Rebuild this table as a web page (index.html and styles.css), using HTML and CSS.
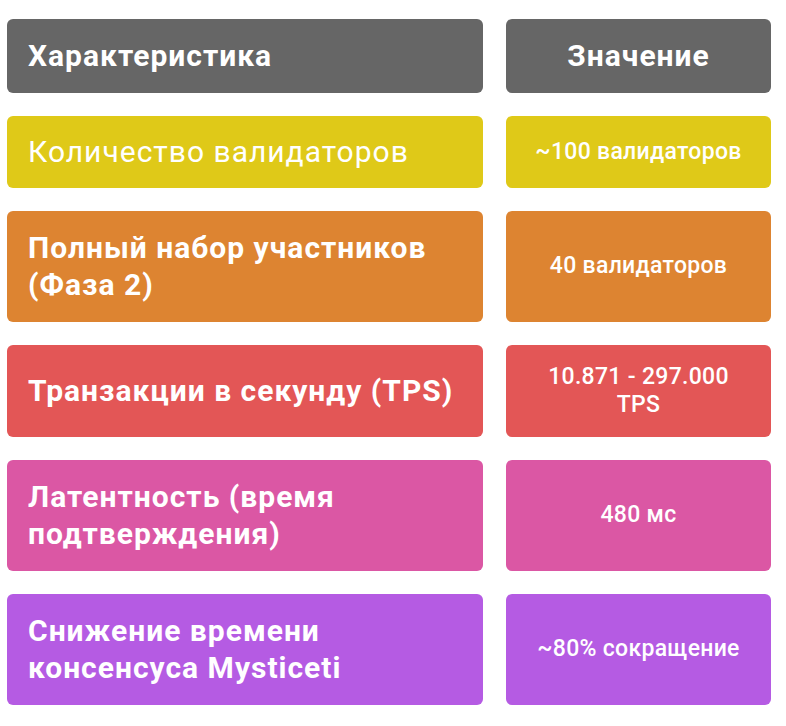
FILE: index.html
```html
<!DOCTYPE html>
<html lang="ru">
<head>
<meta charset="utf-8">
<title>Характеристики</title>
<link rel="stylesheet" href="styles.css">
</head>
<body>
<div class="table">
  <div class="cell key head">Характеристика</div>
  <div class="cell val head">Значение</div>

  <div class="cell key yellow light">Количество валидаторов</div>
  <div class="cell val yellow">~100 валидаторов</div>

  <div class="cell key orange">Полный набор участников (Фаза 2)</div>
  <div class="cell val orange">40 валидаторов</div>

  <div class="cell key red">Транзакции в секунду (TPS)</div>
  <div class="cell val red">10.871 - 297.000<br>TPS</div>

  <div class="cell key pink">Латентность (время подтверждения)</div>
  <div class="cell val pink">480 мс</div>

  <div class="cell key purple">Снижение времени консенсуса Mysticeti</div>
  <div class="cell val purple">~80% сокращение</div>
</div>
</body>
</html>
```

FILE: styles.css
```css
html, body {
  margin: 0;
  padding: 0;
  background: #ffffff;
}

body {
  font-family: Roboto, "Liberation Sans", Arial, sans-serif;
  color: #ffffff;
}

.table {
  display: grid;
  grid-template-columns: 476px 265px;
  column-gap: 23px;
  row-gap: 23px;
  padding: 19px 0 0 7px;
}

.cell {
  display: flex;
  align-items: center;
  border-radius: 6px;
  padding: 18px 21px;
  box-sizing: border-box;
}

.key {
  font-size: 30px;
  font-weight: 700;
  line-height: 37.5px;
  letter-spacing: 1px;
}

.key.light {
  font-weight: 400;
  font-size: 30px;
  line-height: 36px;
  letter-spacing: 1px;
}

.val {
  justify-content: center;
  text-align: center;
  font-size: 23px;
  font-weight: 500;
  line-height: 28px;
  letter-spacing: 0.3px;
}

.val.head {
  font-size: 30px;
  font-weight: 700;
  line-height: 37.5px;
  letter-spacing: 1px;
}

.head { background: #666666; }
.yellow { background: #dfc918; }
.orange { background: #dd8431; }
.red { background: #e35656; }
.pink { background: #db57a4; }
.purple { background: #b55be3; }
```
